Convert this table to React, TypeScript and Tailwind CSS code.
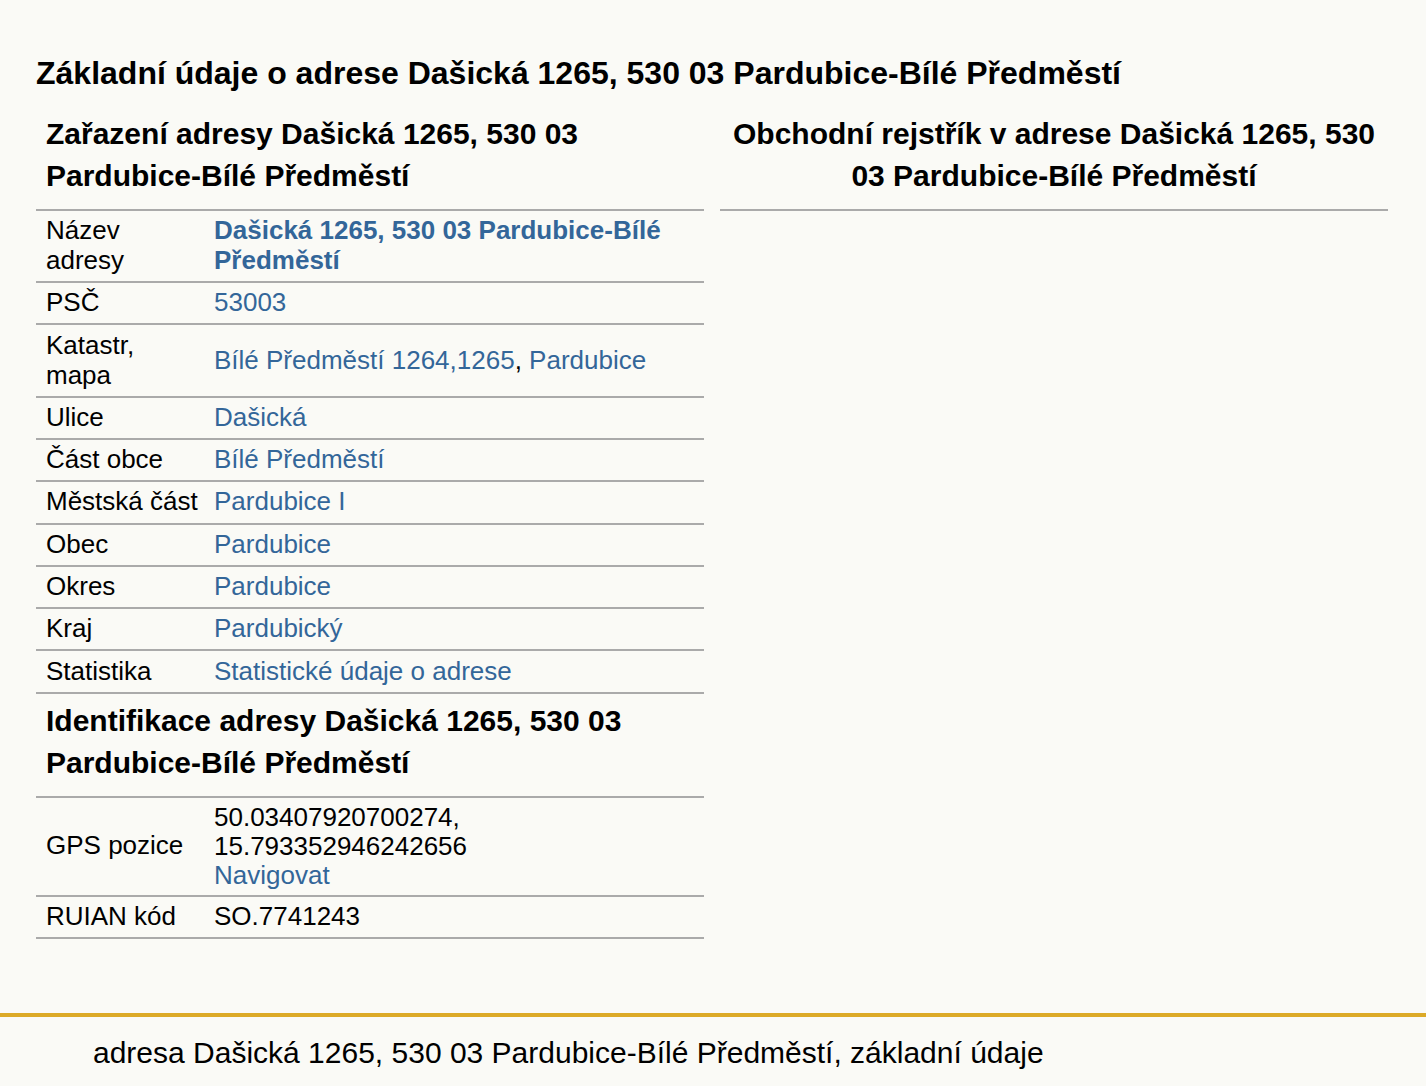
import React from 'react';

type Row = {
  label: React.ReactNode;
  value: React.ReactNode;
};

const link = 'text-[#336699] hover:underline';

function A({ children, bold }: { children: React.ReactNode; bold?: boolean }) {
  return (
    <a href="#" className={bold ? `${link} font-bold` : link}>
      {children}
    </a>
  );
}

const zarazeni: Row[] = [
  { label: <>Název<br />adresy</>, value: <A bold>Dašická 1265, 530 03 Pardubice-Bílé Předměstí</A> },
  { label: 'PSČ', value: <A>53003</A> },
  { label: <>Katastr,<br />mapa</>, value: <><A>Bílé Předměstí 1264,1265</A>, <A>Pardubice</A></> },
  { label: 'Ulice', value: <A>Dašická</A> },
  { label: 'Část obce', value: <A>Bílé Předměstí</A> },
  { label: 'Městská část', value: <A>Pardubice I</A> },
  { label: 'Obec', value: <A>Pardubice</A> },
  { label: 'Okres', value: <A>Pardubice</A> },
  { label: 'Kraj', value: <A>Pardubický</A> },
  { label: 'Statistika', value: <A>Statistické údaje o adrese</A> },
];

const identifikace: Row[] = [
  {
    label: 'GPS pozice',
    value: (
      <div className="leading-[29px]">
        50.03407920700274, 15.793352946242656
        <br />
        <A>Navigovat</A>
      </div>
    ),
  },
  { label: 'RUIAN kód', value: 'SO.7741243' },
];

function InfoTable({ rows }: { rows: Row[] }) {
  return (
    <div className="flex flex-col">
      {rows.map((r, i) => (
        <div key={i} className="grid grid-cols-[168px_1fr] items-center border-b-2 border-[#aaaaaa] py-[5.2px]">
          <div className="pl-[10px] whitespace-nowrap">{r.label}</div>
          <div className="pl-[10px] pr-[10px]">{r.value}</div>
        </div>
      ))}
    </div>
  );
}

function Heading({ children, center }: { children: React.ReactNode; center?: boolean }) {
  return (
    <h3
      className={`px-[10px] pt-[6px] pb-[12px] text-[30px] leading-[42px] font-bold border-b-2 border-[#aaaaaa] ${
        center ? 'text-center' : ''
      }`}
    >
      {children}
    </h3>
  );
}

export default function App() {
  return (
    <div className="min-h-screen bg-[#fafaf6] text-black font-['Liberation_Sans',Arial,sans-serif] text-[26px] leading-[29.9px]">
      <main className="px-[36px] pt-[55px] pb-[74px]">
        <h2 className="text-[32px] leading-[37px] font-bold">
          Základní údaje o adrese Dašická 1265, 530 03 Pardubice-Bílé Předměstí
        </h2>
        <div className="mt-[15px] grid grid-cols-2 gap-[16px] w-[1352px] items-start">
          <section>
            <Heading>Zařazení adresy Dašická 1265, 530 03 Pardubice-Bílé Předměstí</Heading>
            <InfoTable rows={zarazeni} />
            <Heading>Identifikace adresy Dašická 1265, 530 03 Pardubice-Bílé Předměstí</Heading>
            <InfoTable rows={identifikace} />
          </section>
          <section>
            <Heading center>Obchodní rejstřík v adrese Dašická 1265, 530 03 Pardubice-Bílé Předměstí</Heading>
          </section>
        </div>
      </main>
      <footer className="border-t-4 border-[#dcaa28] pl-[93px] pt-[19px] pb-[20px]">
        <p className="text-[30px] leading-[34.5px]">adresa Dašická 1265, 530 03 Pardubice-Bílé Předměstí, základní údaje</p>
      </footer>
    </div>
  );
}
